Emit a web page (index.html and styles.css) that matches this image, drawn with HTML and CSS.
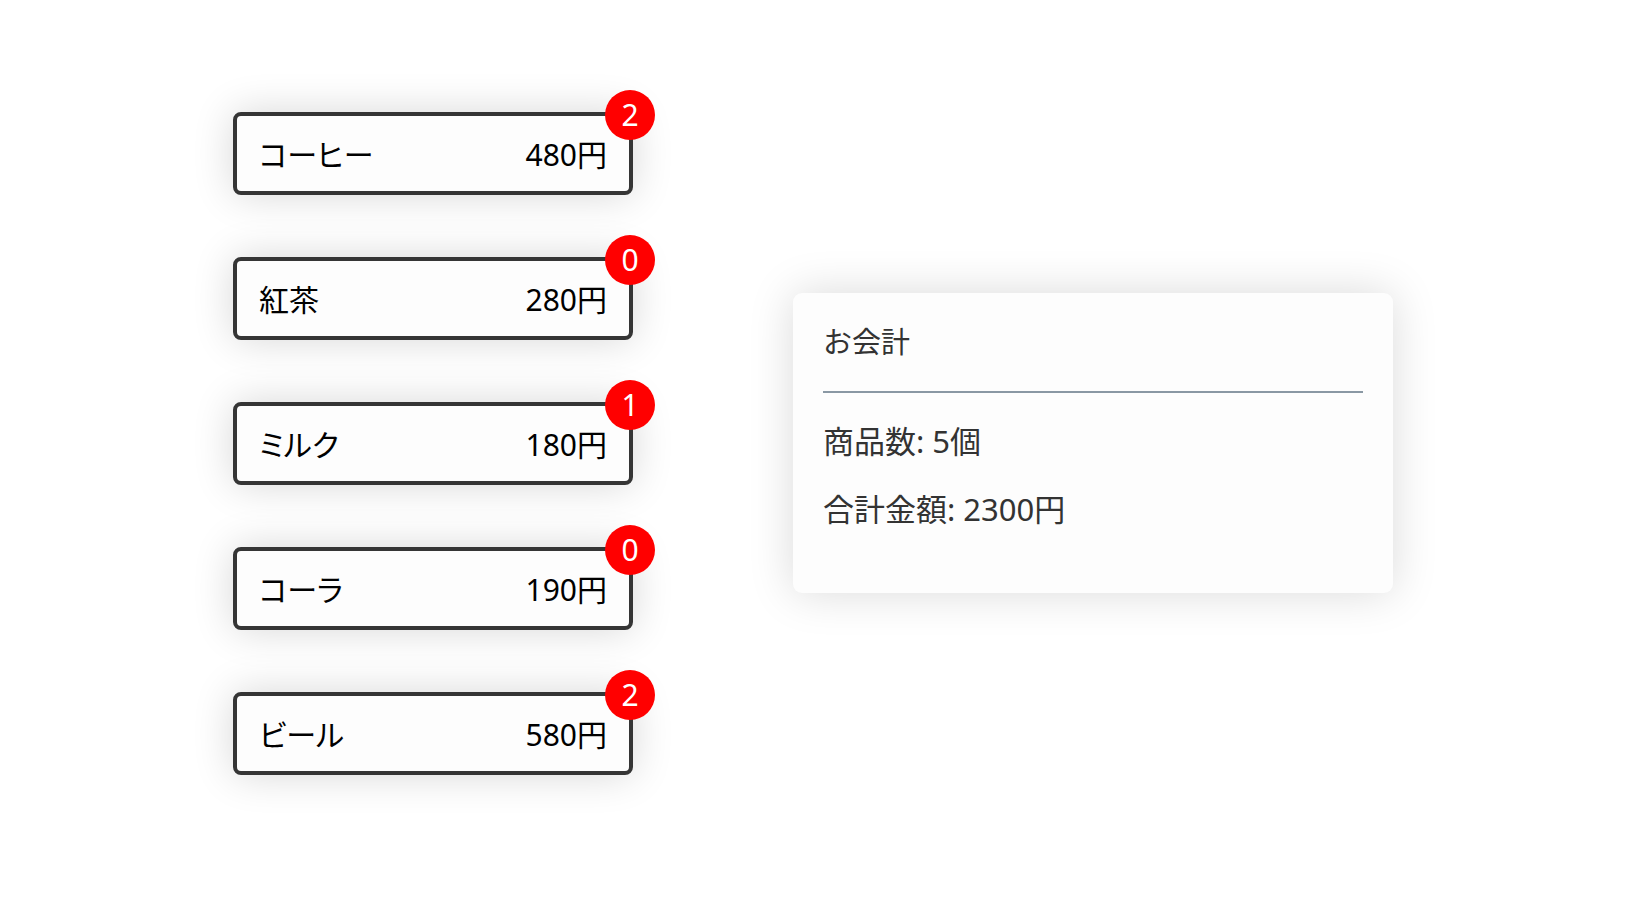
FILE: index.html
```html
<!DOCTYPE html>
<html lang="ja">
<head>
<meta charset="utf-8">
<title>お会計</title>
<link rel="stylesheet" href="styles.css">
</head>
<body>
<main class="page">
  <section class="menu">
    <div class="item"><span class="name">コーヒー</span><span class="price">480円</span><span class="badge">2</span></div>
    <div class="item"><span class="name">紅茶</span><span class="price">280円</span><span class="badge">0</span></div>
    <div class="item"><span class="name">ミルク</span><span class="price">180円</span><span class="badge">1</span></div>
    <div class="item"><span class="name">コーラ</span><span class="price">190円</span><span class="badge">0</span></div>
    <div class="item"><span class="name">ビール</span><span class="price">580円</span><span class="badge">2</span></div>
  </section>
  <section class="summary">
    <h2 class="summary-title">お会計</h2>
    <hr class="divider">
    <p class="summary-line">商品数: 5個</p>
    <p class="summary-line">合計金額: 2300円</p>
  </section>
</main>
</body>
</html>
```

FILE: styles.css
```css
html, body {
  margin: 0;
  padding: 0;
  background: #ffffff;
}

body {
  font-family: "Noto Sans", "Noto Sans CJK JP", sans-serif;
}

.page {
  box-sizing: border-box;
  height: 100vh;
  padding-bottom: 12px;
  display: flex;
  justify-content: center;
  align-items: center;
  gap: 160px;
}

.menu {
  display: flex;
  flex-direction: column;
  gap: 62px;
}

.item {
  position: relative;
  box-sizing: border-box;
  width: 400px;
  height: 83px;
  border: 4px solid #353535;
  border-radius: 8px;
  background: #fdfdfd;
  box-shadow: 0 0 40px rgba(0, 0, 0, 0.16);
  display: flex;
  justify-content: space-between;
  align-items: center;
  padding: 0 22px;
  font-size: 30px;
  color: #000000;
}

.name {
  font-feature-settings: "palt" 1;
}

.badge {
  position: absolute;
  top: -26px;
  right: -26px;
  width: 50px;
  height: 50px;
  border-radius: 50%;
  background: #ff0000;
  color: #ffffff;
  font-size: 30px;
  line-height: 50px;
  text-align: center;
}

.summary {
  box-sizing: border-box;
  width: 600px;
  height: 300px;
  padding: 30px;
  border-radius: 9px;
  background: #fdfdfd;
  box-shadow: 0 0 45px rgba(0, 0, 0, 0.15);
  color: #333333;
}

.summary-title {
  margin: 0;
  font-size: 29px;
  font-weight: normal;
  line-height: 38px;
}

.divider {
  margin: 30px 0 0 0;
  border: none;
  height: 2px;
  background: #8a98a4;
}

.summary-line {
  margin: 28px 0 0 0;
  font-size: 31px;
  line-height: 40px;
}
```
